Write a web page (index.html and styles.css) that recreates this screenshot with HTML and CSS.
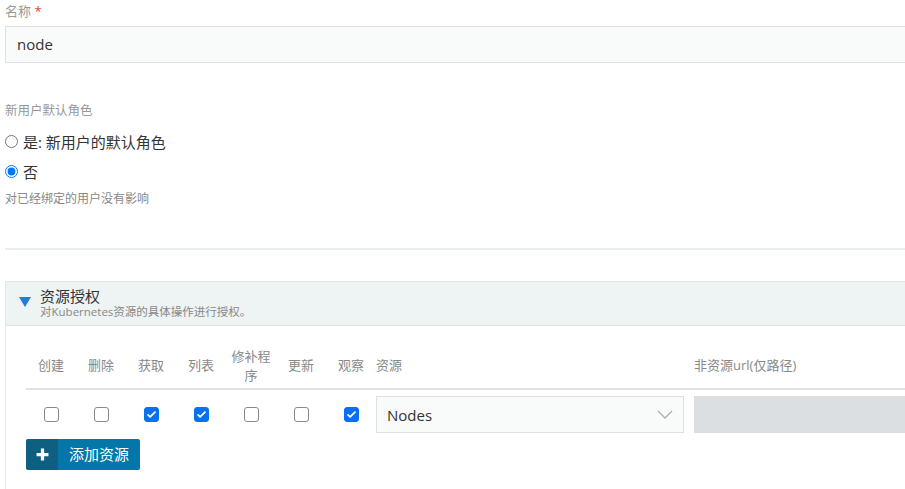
FILE: index.html
```html
<!DOCTYPE html>
<html lang="zh">
<head>
<meta charset="utf-8">
<title>角色</title>
<link rel="stylesheet" href="styles.css">
</head>
<body>
<div class="page">
  <div class="field">
    <label class="label">名称 <span class="req">*</span></label>
    <div class="input">node</div>
  </div>

  <div class="field role">
    <div class="label small">新用户默认角色</div>
    <label class="radio-row"><input type="radio" name="def"> 是: 新用户的默认角色</label>
    <label class="radio-row"><input type="radio" name="def" checked> 否</label>
    <div class="help">对已经绑定的用户没有影响</div>
  </div>

  <div class="divider"></div>

  <div class="panel">
    <div class="panel-head">
      <span class="caret"></span>
      <div class="titles">
        <div class="title">资源授权</div>
        <div class="subtitle">对Kubernetes资源的具体操作进行授权。</div>
      </div>
    </div>
    <div class="panel-body">
      <div class="grid head">
        <div class="hc">创建</div>
        <div class="hc">删除</div>
        <div class="hc">获取</div>
        <div class="hc">列表</div>
        <div class="hc">修补程<br>序</div>
        <div class="hc">更新</div>
        <div class="hc">观察</div>
        <div class="hl">资源</div>
        <div class="hl">非资源url(仅路径)</div>
      </div>
      <div class="grid row">
        <div class="cc"><span class="cb"></span></div>
        <div class="cc"><span class="cb"></span></div>
        <div class="cc"><span class="cb on"><svg viewBox="0 0 16 16" width="11" height="11"><path d="M3 8.5l3 3 7-7" fill="none" stroke="#fff" stroke-width="2.6" stroke-linecap="round" stroke-linejoin="round"/></svg></span></div>
        <div class="cc"><span class="cb on"><svg viewBox="0 0 16 16" width="11" height="11"><path d="M3 8.5l3 3 7-7" fill="none" stroke="#fff" stroke-width="2.6" stroke-linecap="round" stroke-linejoin="round"/></svg></span></div>
        <div class="cc"><span class="cb"></span></div>
        <div class="cc"><span class="cb"></span></div>
        <div class="cc"><span class="cb on"><svg viewBox="0 0 16 16" width="11" height="11"><path d="M3 8.5l3 3 7-7" fill="none" stroke="#fff" stroke-width="2.6" stroke-linecap="round" stroke-linejoin="round"/></svg></span></div>
        <div class="select"><span>Nodes</span><svg viewBox="0 0 16 10" width="16" height="10"><path d="M1 1l7 7 7-7" fill="none" stroke="#a9b0b3" stroke-width="1.3"/></svg></div>
        <div class="disabled"></div>
      </div>
      <button class="btn"><span class="btn-icon"><svg viewBox="0 0 12 12" width="13" height="13"><path d="M6 0.5v11M0.5 6h11" stroke="#fff" stroke-width="3"/></svg></span><span class="btn-text">添加资源</span></button>
    </div>
  </div>
</div>
</body>
</html>
```

FILE: styles.css
```css
html, body {
  margin: 0;
  padding: 0;
  background: #fff;
  overflow: hidden;
}
body {
  font-family: "Open Sans", "Noto Sans CJK SC", sans-serif;
  color: #333;
}
.page {
  width: 1000px;
  padding-left: 5px;
}
.label {
  display: block;
  font-size: 13px;
  line-height: 22px;
  color: #999;
}
.req { color: #e53935; }
.input {
  margin-top: 4px;
  height: 35px;
  border: 1px solid #dce1e1;
  background: #f9fafa;
  font-size: 15px;
  line-height: 35px;
  padding-left: 11px;
  color: #333;
}
.role { margin-top: 39px; }
.label.small {
  font-size: 12.5px;
  line-height: 18px;
  margin-bottom: 6px;
}
.radio-row {
  display: flex;
  align-items: center;
  height: 30px;
  font-size: 15px;
  color: #333;
}
.radio-row input {
  margin: 0 5px 0 0;
  width: 13px;
  height: 13px;
}
.help {
  margin-top: 5px;
  font-size: 12px;
  line-height: 16px;
  color: #888;
}
.divider {
  margin-top: 41px;
  height: 2px;
  background: #e9eded;
}
.panel {
  margin-top: 31px;
  border-left: 1px solid #e3e8e8;
  border-top: 1px solid #dfe5e5;
  height: 220px;
}
.panel-head {
  display: flex;
  align-items: flex-start;
  background: #eef3f3;
  border-bottom: 1px solid #dde3e3;
  box-sizing: border-box;
  height: 44px;
}
.caret {
  width: 0;
  height: 0;
  border-left: 6.5px solid transparent;
  border-right: 6.5px solid transparent;
  border-top: 10px solid #1f7fd4;
  margin: 15px 0 0 13px;
}
.titles { margin-left: 9px; padding-top: 6px; }
.title {
  font-size: 15px;
  line-height: 17px;
  color: #333;
}
.subtitle {
  font-size: 11.5px;
  line-height: 14px;
  color: #888;
}
.panel-body { padding: 17px 0 0 20px; }
.grid {
  display: grid;
  grid-template-columns: repeat(7, 50px) 308px 10px 1fr;
}
.grid .disabled, .grid .hl:last-child { grid-column: 10; }
.head {
  height: 45px;
  border-bottom: 2px solid #e2e2e2;
  align-items: center;
  font-size: 13px;
  color: #888;
}
.hc { text-align: center; line-height: 19px; }
.hl { line-height: 19px; }
.row {
  padding-top: 6px;
  height: 37px;
  align-items: center;
}
.cc { display: flex; justify-content: center; }
.cb {
  width: 13px;
  height: 13px;
  border: 1px solid #8a8a8a;
  border-radius: 3px;
  display: flex;
  align-items: center;
  justify-content: center;
  background: #fff;
}
.cb.on {
  background: #0b6ff2;
  border-color: #0b6ff2;
}
.select {
  height: 35px;
  border: 1px solid #dce1e1;
  background: #f9fafa;
  display: flex;
  align-items: center;
  justify-content: space-between;
  padding: 0 10px 0 10px;
  font-size: 15px;
  color: #333;
}
.disabled {
  height: 37px;
  background: #dcdfe1;
}
.btn {
  margin-top: 6px;
  display: flex;
  height: 31px;
  padding: 0;
  border: 0;
  border-radius: 2px;
  overflow: hidden;
  font-family: inherit;
  cursor: pointer;
}
.btn-icon {
  width: 32px;
  background: #0f5f80;
  display: flex;
  align-items: center;
  justify-content: center;
}
.btn-text {
  background: #0277a8;
  color: #fff;
  font-size: 15px;
  line-height: 31px;
  padding: 0 11px;
}
```
